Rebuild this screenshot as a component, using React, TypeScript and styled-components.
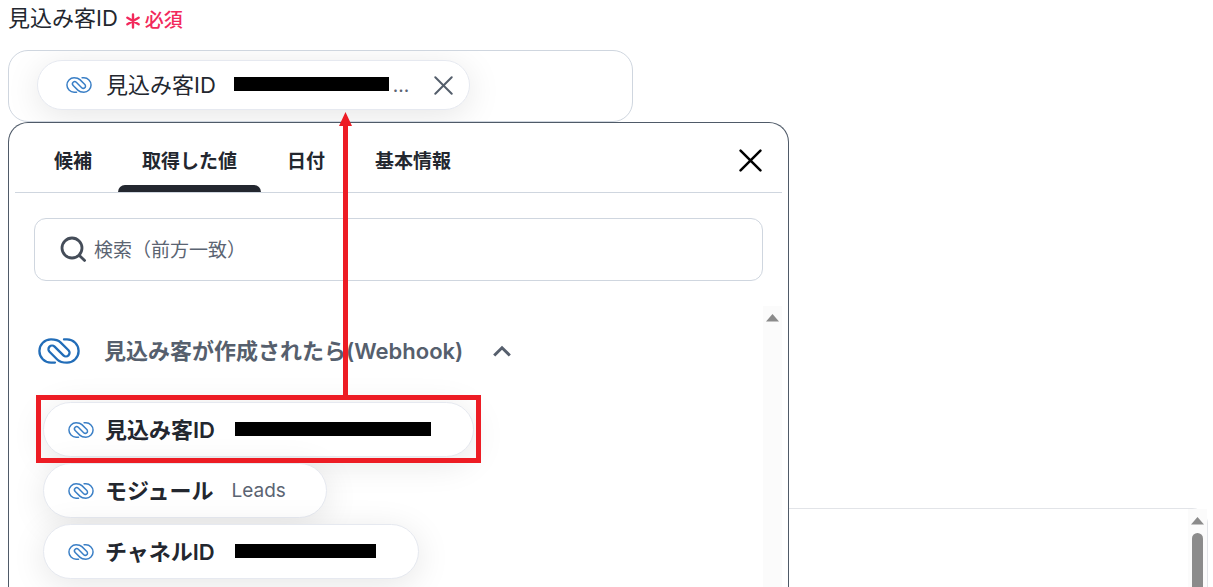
import React from "react";
import styled, { createGlobalStyle } from "styled-components";

const GlobalStyle = createGlobalStyle`
  *, *::before, *::after { box-sizing: border-box; }
  body {
    margin: 0;
    background: #fff;
    color: #23272f;
    font-family: Inter, "Noto Sans CJK JP", sans-serif;
    overflow: hidden;
  }
  button, input { font: inherit; color: inherit; }
  button { margin: 0; padding: 0; border: 0; background: none; cursor: pointer; }
`;

const Page = styled.main`
  display: flex;
  flex-direction: column;
  height: 100vh;
  padding: 0 5px 0 8px;
  overflow: hidden;
`;

const FieldLabel = styled.div`
  display: flex;
  align-items: center;
  gap: 8px;
  height: 36px;
  margin-bottom: 14px;
  font-size: 22px;
  line-height: 36px;
`;

const Required = styled.span`
  display: flex;
  align-items: center;
  gap: 5px;
  padding-top: 5px;
  color: #f2295b;
  font-size: 19px;
  font-weight: 500;
`;

const Field = styled.div`
  display: flex;
  align-items: center;
  flex: none;
  width: 100%;
  max-width: 625px;
  height: 72px;
  padding: 0 28px 2px;
  border: 1px solid #cfd6df;
  border-radius: 20px;
  overflow: hidden;
`;

const SelectedChip = styled.div`
  display: flex;
  align-items: center;
  width: 433px;
  height: 50px;
  padding: 0 16px 0 28px;
  border: 1px solid #e6e9f0;
  border-radius: 25px;
  background: #fff;
  box-shadow: 0 6px 34px rgba(0, 0, 0, 0.1);
  font-size: 22px;
`;

const ChipLabel = styled.span<{ $strong?: boolean }>`
  margin: ${(p) => (p.$strong ? "0 18px 0 11px" : "0 16px 0 14px")};
  font-size: 22px;
  line-height: 32px;
  font-weight: ${(p) => (p.$strong ? 600 : 400)};
  white-space: nowrap;
`;

const Redacted = styled.span<{ $width: number }>`
  flex: none;
  width: ${(p) => p.$width}px;
  height: 14px;
  margin: 0 2px 2px;
  background: #000;
`;

const Ellipsis = styled.span`
  margin: 0 auto 0 2px;
  color: #5b6472;
  font-size: 19px;
`;

const IconButton = styled.button`
  display: flex;
  align-items: center;
  justify-content: center;
  flex: none;
  width: 20px;
  height: 20px;
`;

const Columns = styled.div`
  display: flex;
  flex: 1;
  min-height: 0;
`;

const Panel = styled.section`
  display: flex;
  flex-direction: column;
  flex: 0 1 781px;
  min-width: 0;
  padding: 0 6px;
  border: 1px solid #4f5a68;
  border-bottom: 0;
  border-radius: 20px 20px 0 0;
`;

const PanelHeader = styled.div`
  display: flex;
  align-items: center;
  justify-content: space-between;
  flex: none;
  height: 70px;
  padding: 6px 22px 0 15px;
  border-bottom: 1px solid #cfd6df;
`;

const Tabs = styled.div`
  display: flex;
  gap: 2px;
  height: 100%;
`;

const Tab = styled.button<{ $active?: boolean }>`
  position: relative;
  padding: 2px 24px 0;
  font-size: 19px;
  line-height: 28px;
  font-weight: 600;

  &::after {
    content: "";
    display: ${(p) => (p.$active ? "block" : "none")};
    position: absolute;
    left: 0;
    right: 0;
    bottom: 0;
    height: 7px;
    border-radius: 7px 7px 0 0;
    background: #23272f;
  }
`;

const SearchBox = styled.label`
  display: flex;
  align-items: center;
  flex: none;
  gap: 6px;
  height: 63px;
  margin: 25px 19px;
  padding: 0 25px;
  border: 1px solid #cfd6df;
  border-radius: 12px;
`;

const SearchInput = styled.input`
  flex: 1;
  min-width: 0;
  padding: 2px 0 0;
  border: 0;
  outline: 0;
  background: none;
  font-size: 19px;
  line-height: 28px;

  &::placeholder { color: #5b6472; opacity: 1; }
`;

const ListArea = styled.div`
  display: flex;
  flex: 1;
  min-height: 0;
`;

const List = styled.div`
  flex: 1;
  min-width: 0;
  padding: 0 28px;
`;

const GroupToggle = styled.button`
  display: flex;
  align-items: center;
  height: 90px;
  margin-left: -5px;
  color: #565f6d;
  font-size: 22px;
  line-height: 32px;
  font-weight: 600;
  white-space: nowrap;
`;

const GroupTitle = styled.span`
  margin: 0 30px 0 24px;
`;

const ChipList = styled.ul`
  display: flex;
  flex-direction: column;
  align-items: flex-start;
  gap: 6px;
  margin: 0;
  padding: 6px 0 0;
  list-style: none;
`;

const ChipItem = styled.li`
  position: relative;
`;

const Chip = styled.button`
  display: flex;
  align-items: center;
  height: 55px;
  padding: 0 40px 0 24px;
  border: 1px solid #e6e9f0;
  border-radius: 28px;
  background: #fff;
  box-shadow: 0 6px 34px rgba(0, 0, 0, 0.1);
`;

const ChipValue = styled.span`
  color: #5b6472;
  font-size: 19px;
  line-height: 28px;
`;

const Highlight = styled.div`
  position: absolute;
  inset: -7px -7px -6px;
  border: 5px solid #ed1c24;
  pointer-events: none;
  z-index: 1;
`;

const Arrow = styled.svg`
  position: absolute;
  left: 298px;
  bottom: 100%;
`;

const Scrollbar = styled.div`
  display: flex;
  flex-direction: column;
  align-items: center;
  flex: none;
  gap: 8px;
  width: 19px;
  padding-top: 8px;
  background: #fbfbfb;
`;

const Thumb = styled.div`
  flex: 1;
  width: 11px;
  border-radius: 6px 6px 0 0;
  background: #8b8b8b;
`;

const SidePane = styled.aside`
  display: flex;
  justify-content: flex-end;
  flex: 1;
  min-width: 0;
  margin-top: 386px;
  border: solid #e2e4e8;
  border-width: 1px 1px 0 0;
  border-radius: 0 16px 0 0;
`;

const Icon = styled.svg`
  flex: none;
`;

const LinkLogo = ({ width, stroke, color }: { width: number; stroke: number; color: string }) => (
  <Icon
    width={width}
    height={Math.round((width * 26) / 42)}
    viewBox="0 0 42 26"
    fill="none"
    stroke={color}
    strokeWidth={stroke}
    strokeLinecap="round"
    strokeLinejoin="round"
    aria-hidden="true"
  >
    <path d="M17 24.6H13A11.6 11.6 0 0 1 13 1.4C17 1.4 19.5 1.4 22.5 4.3L30.5 12.3A3.6 3.6 0 0 1 25.4 17.4L16.6 8.6A3.6 3.6 0 0 0 11.5 13.7L19.5 21.7C22.5 24.6 25 24.6 29 24.6A11.6 11.6 0 0 0 29 1.4H26" />
  </Icon>
);

const Cross = ({ size, color, weight }: { size: number; color: string; weight: number }) => (
  <Icon width={size} height={size} viewBox="0 0 22 22" stroke={color} strokeWidth={weight} strokeLinecap="round" aria-hidden="true">
    <path d="M1.5 1.5L20.5 20.5M20.5 1.5L1.5 20.5" />
  </Icon>
);

const ScrollUp = () => (
  <svg width="13" height="8" viewBox="0 0 13 8" fill="#8b8b8b" aria-hidden="true">
    <path d="M6.5 0L13 7.5H0Z" />
  </svg>
);

const tabs = ["候補", "取得した値", "日付", "基本情報"];

const outputs = [
  { label: "見込み客ID", hidden: 196, highlighted: true },
  { label: "モジュール", value: "Leads" },
  { label: "チャネルID", hidden: 141 },
];

export default function App() {
  return (
    <>
      <GlobalStyle />
      <Page>
        <FieldLabel>
          見込み客ID
          <Required>
            <svg width="14" height="16" viewBox="0 0 14 16" stroke="currentColor" strokeWidth="2.4" strokeLinecap="round" aria-hidden="true">
              <path d="M7 1.5V14.5M1.4 4.7L12.6 11.3M12.6 4.7L1.4 11.3" />
            </svg>
            必須
          </Required>
        </FieldLabel>
        <Field>
          <SelectedChip>
            <LinkLogo width={26} stroke={2.4} color="#3a7fc6" />
            <ChipLabel>見込み客ID</ChipLabel>
            <Redacted $width={155} />
            <Ellipsis>...</Ellipsis>
            <IconButton aria-label="選択を解除">
              <Cross size={19} color="#545e6b" weight={2.3} />
            </IconButton>
          </SelectedChip>
        </Field>
        <Columns>
          <Panel>
            <PanelHeader>
              <Tabs role="tablist">
                {tabs.map((name, i) => (
                  <Tab key={name} role="tab" aria-selected={i === 1} $active={i === 1}>
                    {name}
                  </Tab>
                ))}
              </Tabs>
              <IconButton aria-label="閉じる">
                <Cross size={23} color="#000" weight={2.4} />
              </IconButton>
            </PanelHeader>
            <SearchBox>
              <Icon width="28" height="28" viewBox="0 0 28 28" fill="none" stroke="#454d59" strokeWidth="2.8" strokeLinecap="round" aria-hidden="true">
                <circle cx="12" cy="12" r="10" />
                <path d="M19.4 19.4L24.6 24.4" />
              </Icon>
              <SearchInput type="text" aria-label="検索" placeholder="検索（前方一致）" />
            </SearchBox>
            <ListArea>
              <List>
                <GroupToggle aria-expanded="true">
                  <LinkLogo width={42} stroke={2.3} color="#226db8" />
                  <GroupTitle>見込み客が作成されたら(Webhook)</GroupTitle>
                  <svg width="18" height="12" viewBox="0 0 18 12" fill="none" stroke="currentColor" strokeWidth="3" aria-hidden="true">
                    <path d="M1.2 10.5L9 2.8L16.8 10.5" />
                  </svg>
                </GroupToggle>
                <ChipList>
                  {outputs.map((o) => (
                    <ChipItem key={o.label}>
                      <Chip>
                        <LinkLogo width={26} stroke={2.4} color="#3a7fc6" />
                        <ChipLabel $strong>{o.label}</ChipLabel>
                        {o.hidden ? <Redacted $width={o.hidden} /> : <ChipValue>{o.value}</ChipValue>}
                      </Chip>
                      {o.highlighted && (
                        <Highlight>
                          <Arrow width="13" height="288" viewBox="0 0 13 288" fill="#ed1c24" aria-hidden="true">
                            <path d="M6.5 0L13 14H9V288H4V14H0Z" />
                          </Arrow>
                        </Highlight>
                      )}
                    </ChipItem>
                  ))}
                </ChipList>
              </List>
              <Scrollbar>
                <ScrollUp />
              </Scrollbar>
            </ListArea>
          </Panel>
          <SidePane>
            <Scrollbar>
              <ScrollUp />
              <Thumb />
            </Scrollbar>
          </SidePane>
        </Columns>
      </Page>
    </>
  );
}
